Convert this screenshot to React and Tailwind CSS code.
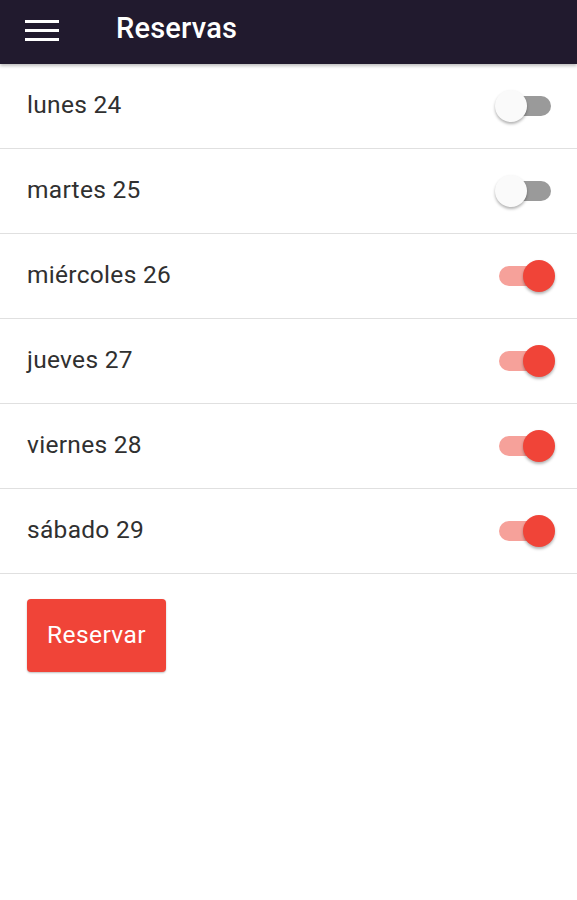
import React from "react";

const days = [
  { label: "lunes 24", on: false },
  { label: "martes 25", on: false },
  { label: "miércoles 26", on: true },
  { label: "jueves 27", on: true },
  { label: "viernes 28", on: true },
  { label: "sábado 29", on: true },
];

function Toggle({ on }) {
  return (
    <div className="relative w-[60px] h-[34px] flex items-center">
      <div
        className={
          "absolute left-[4px] right-[4px] h-[20px] rounded-full " +
          (on ? "bg-[#f6a19a]" : "bg-[#9a9a9a]")
        }
      />
      <div
        className={
          "absolute top-[1px] w-[32px] h-[32px] rounded-full shadow-[0_2px_3px_rgba(0,0,0,0.3)] " +
          (on ? "right-[0px] bg-[#f04438]" : "left-[0px] bg-[#fafafa]")
        }
      />
    </div>
  );
}

export default function App() {
  return (
    <div className="w-[577px] h-[900px] bg-white flex flex-col" style={{ fontFamily: "Roboto, 'Noto Sans', sans-serif" }}>
      <div className="h-[64px] bg-[#211a2e] flex items-center pl-[25px] shadow-[0_2px_3px_rgba(0,0,0,0.25)] relative z-10">
        <div className="w-[34px] flex flex-col gap-[6px] -mt-[4px]">
          <div className="h-[3px] bg-white" />
          <div className="h-[3px] bg-white" />
          <div className="h-[3px] bg-white" />
        </div>
        <div className="ml-[57px] text-white text-[29px] tracking-[0.2px] font-medium leading-none -mt-[7px]">Reservas</div>
      </div>
      {days.map((d) => (
        <div key={d.label} className="h-[85px] border-b-[1.5px] border-[#e0e0e0] flex items-center justify-between pl-[27px] pr-[22px]">
          <span className="text-[24.5px] tracking-[0.3px] text-[#303030] -mt-[1px]">{d.label}</span>
          <Toggle on={d.on} />
        </div>
      ))}
      <div className="pl-[27px] pt-[25px]">
        <button className="w-[139px] h-[73px] bg-[#f04438] rounded-[4px] text-white text-[24.5px] tracking-[0.4px] shadow-[0_1px_2px_rgba(0,0,0,0.25)]">
          Reservar
        </button>
      </div>
    </div>
  );
}
